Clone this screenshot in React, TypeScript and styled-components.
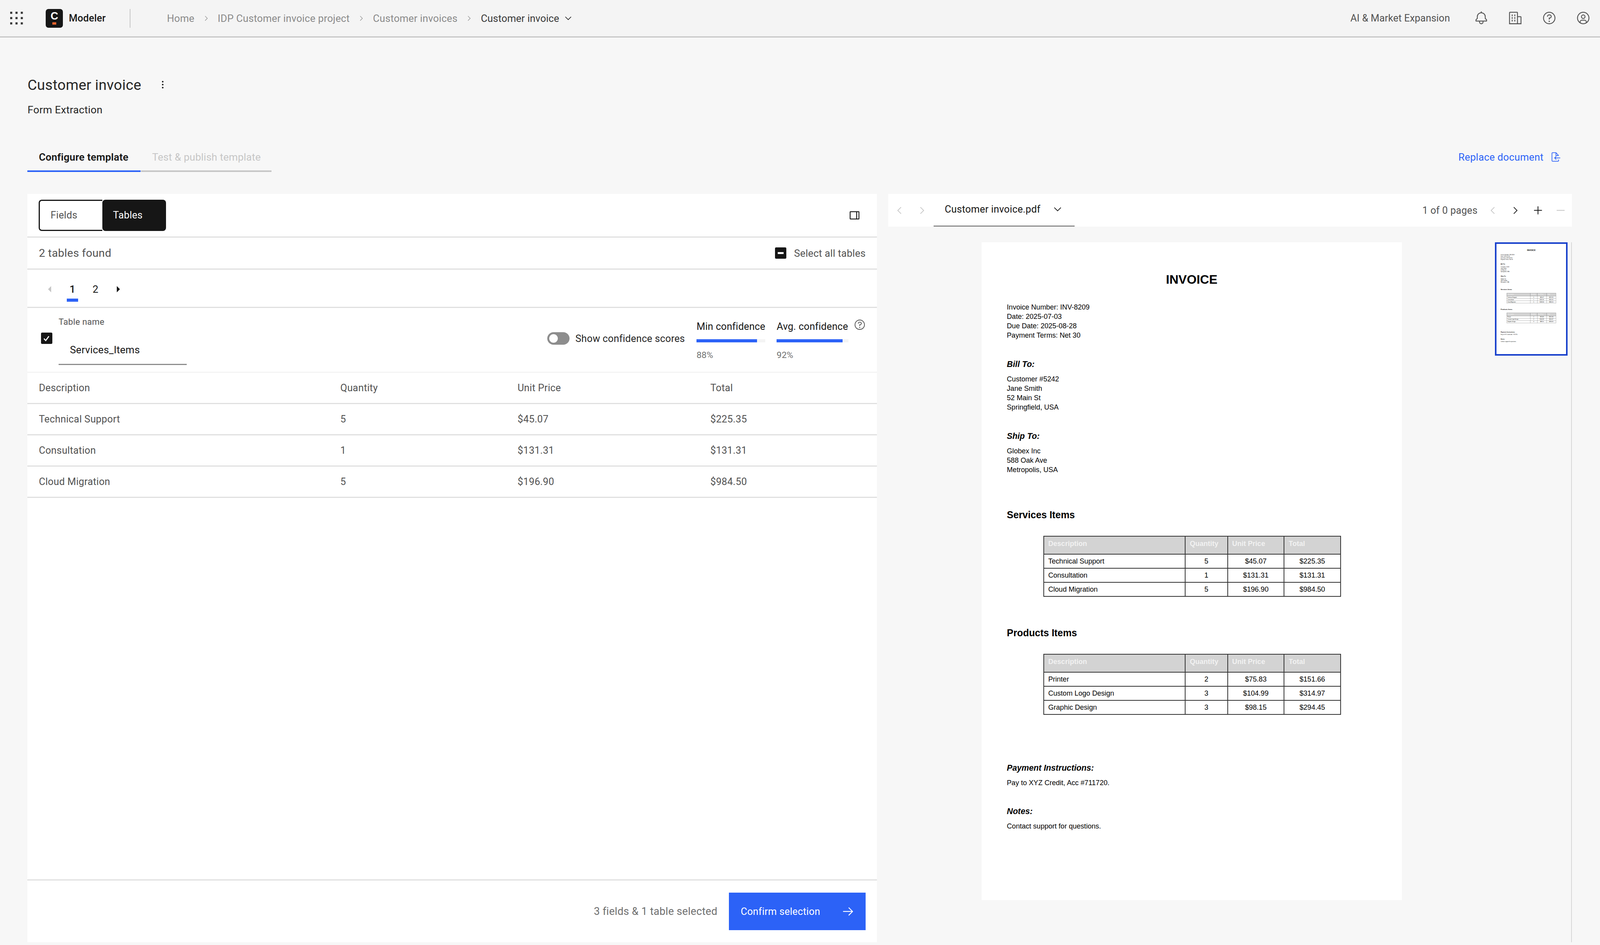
import React from 'react';
import styled, { createGlobalStyle } from 'styled-components';

const UI_FONT = `Roboto, "Noto Sans", sans-serif`;
const DOC_FONT = `"Liberation Sans", Arial, sans-serif`;
const BLUE = '#2c62f7';

// horizontal sizes are taken from the 4532 wide design and follow the window width
const vx = (n: number) => `${(n / 45.32).toFixed(4)}vw`;

const GlobalStyle = createGlobalStyle`
  html, body {
    margin: 0;
    padding: 0;
    width: 100%;
    height: 100%;
    overflow: hidden;
    background: #f7f7f7;
  }
  * { box-sizing: border-box; }
  body {
    font-family: ${UI_FONT};
    font-size: ${vx(29)};
    color: #161616;
    white-space: nowrap;
  }
`;

const Page = styled.div`
  width: 100vw;
  height: 100vh;
  display: flex;
  flex-direction: column;
`;

const Header = styled.header`
  height: 96px;
  flex: none;
  display: flex;
  align-items: center;
  background: #f4f4f4;
  border-bottom: 3px solid #c6c6c6;
`;

const Switcher = styled.div`
  width: ${vx(130)};
  padding-left: ${vx(29)};
  display: flex;
  align-items: center;
`;

const Logo = styled.div`
  width: ${vx(48)};
  height: 48px;
  flex: none;
  border-radius: 7px;
  background: #161616;
  display: flex;
  flex-direction: column;
  align-items: center;
  padding-top: 3px;
`;

const LogoLetter = styled.span`
  font-family: ${DOC_FONT};
  font-weight: 700;
  font-size: 27px;
  line-height: 30px;
  color: #fff;
`;

const LogoMark = styled.span`
  width: ${vx(11)};
  height: 6px;
  margin-top: 1px;
  background: #e8622c;
`;

const ProductName = styled.span`
  margin-left: ${vx(17)};
  width: ${vx(175)};
  height: 48px;
  line-height: 48px;
  font-weight: 500;
  font-size: ${vx(28)};
  letter-spacing: ${vx(0.2)};
  color: #161616;
  border-right: 2px solid #c6c6c6;
`;

const Breadcrumbs = styled.nav`
  margin-left: ${vx(103)};
  display: flex;
  align-items: center;
`;

const Crumb = styled.span<{ $current?: boolean }>`
  font-size: ${vx(28.5)};
  letter-spacing: ${(p) => vx(p.$current ? 0.1 : 0.25)};
  color: ${(p) => (p.$current ? '#393939' : '#8a8a8a')};
`;

const CrumbSep = styled.span`
  width: ${vx(66)};
  display: flex;
  justify-content: center;
  color: #8a8a8a;
`;

const HeaderRight = styled.div`
  margin-left: auto;
  display: flex;
  align-items: center;
`;

const Org = styled.span`
  margin-right: ${vx(41)};
  font-size: ${vx(28)};
  letter-spacing: ${vx(0.1)};
  color: #525252;
`;

const HeaderIcon = styled.div`
  width: ${vx(96)};
  height: 93px;
  display: flex;
  align-items: center;
  justify-content: center;
  color: #525252;
`;

const Main = styled.main`
  flex: 1;
  min-height: 0;
  padding: 0 ${vx(80)} 7px ${vx(78)};
  display: flex;
  flex-direction: column;
`;

const TitleBlock = styled.div`
  height: 241px;
  flex: none;
  padding-top: 92px;
`;

const TitleRow = styled.div`
  display: flex;
  align-items: center;
  height: 58px;
`;

const Title = styled.h1`
  margin: 0;
  font-size: ${vx(41)};
  font-weight: 400;
  letter-spacing: ${vx(0.3)};
  color: #262626;
`;

const Kebab = styled.div`
  margin-left: ${vx(46)};
  display: flex;
  color: #161616;
`;

const Subtitle = styled.div`
  margin-top: 17px;
  font-size: ${vx(29.5)};
  letter-spacing: ${vx(0.3)};
  line-height: 36px;
  color: #262626;
`;

const TabBar = styled.div`
  flex: none;
  height: 103px;
  display: flex;
  align-items: flex-start;
  justify-content: space-between;
`;

const Tabs = styled.div`
  display: flex;
  gap: ${vx(1)};
`;

const Tab = styled.div<{ $active?: boolean; $w: number }>`
  width: ${(p) => vx(p.$w)};
  height: 103px;
  display: flex;
  align-items: center;
  padding: 30px 0 0 ${vx(32)};
  font-size: ${vx(29)};
  letter-spacing: ${vx(0.2)};
  font-weight: ${(p) => (p.$active ? 600 : 400)};
  color: ${(p) => (p.$active ? '#161616' : '#c6c6c6')};
  border-bottom: 4px solid ${(p) => (p.$active ? BLUE : '#c6c6c6')};
`;

const ReplaceLink = styled.div`
  height: 99px;
  padding-top: 30px;
  display: flex;
  align-items: center;
  gap: ${vx(18)};
  margin-right: ${vx(32)};
  color: ${BLUE};
  font-size: ${vx(28.5)};
  letter-spacing: ${vx(0.3)};
`;

const Columns = styled.div`
  flex: 1;
  min-height: 0;
  margin-top: 56px;
  display: flex;
  gap: ${vx(32)};
`;

const LeftPanel = styled.section`
  width: ${vx(2406)};
  flex: none;
  background: #fff;
  display: flex;
  flex-direction: column;
`;

const Row = styled.div<{ $h: number }>`
  height: ${(p) => p.$h}px;
  flex: none;
  display: flex;
  align-items: center;
  padding: 0 ${vx(32)};
  border-bottom: 3px solid #e0e0e0;
`;

const Segmented = styled.div`
  display: flex;
  width: ${vx(360)};
  height: 80px;
`;

const Segment = styled.div<{ $on?: boolean }>`
  width: ${vx(180)};
  display: flex;
  align-items: center;
  padding-left: ${vx(30)};
  font-size: ${vx(28)};
  letter-spacing: ${vx(0.3)};
  background: ${(p) => (p.$on ? '#161616' : '#fff')};
  color: ${(p) => (p.$on ? '#fff' : '#525252')};
  border: 3px solid #161616;
  border-right: ${(p) => (p.$on ? '3px solid #161616' : 'none')};
  border-left: ${(p) => (p.$on ? 'none' : '3px solid #161616')};
  border-radius: ${(p) => (p.$on ? '8px' : '8px 0 0 8px')};
`;

const Spacer = styled.div`
  flex: 1;
`;

const PanelToggleIcon = styled.svg`
  display: block;
  width: ${vx(28)};
  height: 24px;
  margin-right: ${vx(18)};
`;

const Found = styled.span`
  font-size: ${vx(31.5)};
  letter-spacing: ${vx(0.35)};
  color: #525252;
`;

const CheckBox = styled.div`
  width: ${vx(32)};
  height: ${vx(32)};
  flex: none;
  border-radius: 3px;
  background: #161616;
  display: flex;
  align-items: center;
  justify-content: center;
`;

const CheckMinus = styled.span`
  width: ${vx(16)};
  height: 5px;
  background: #fff;
`;

const SelectAll = styled.span`
  margin-left: ${vx(22)};
  font-size: ${vx(28.5)};
  letter-spacing: ${vx(0.2)};
  color: #525252;
`;

const Pager = styled(Row)`
  padding-left: ${vx(58)};
`;

const PageArrow = styled.div<{ $off?: boolean }>`
  width: 0;
  height: 0;
  margin-top: 5px;
  border-top: 8px solid transparent;
  border-bottom: 8px solid transparent;
  ${(p) =>
    p.$off
      ? `border-right: ${vx(9)} solid #c6c6c6;`
      : `border-left: ${vx(9)} solid #161616;`}
`;

const PagerNums = styled.div`
  display: flex;
  align-items: flex-end;
  margin: 19px ${vx(28)} 0 ${vx(28)};
  height: 50px;
`;

const PageNum = styled.div<{ $on?: boolean }>`
  width: ${vx(32)};
  height: 50px;
  margin: 0 ${vx(16.5)};
  padding-bottom: 6px;
  display: flex;
  align-items: center;
  justify-content: center;
  font-size: ${vx(29)};
  font-weight: ${(p) => (p.$on ? 500 : 400)};
  border-bottom: 8px solid ${(p) => (p.$on ? BLUE : 'transparent')};
`;

const TableHead = styled.div`
  height: 166px;
  flex: none;
  padding: 0 ${vx(32)} 0 ${vx(38)};
  display: flex;
  border-bottom: 3px solid #f4f4f4;
`;

const TableCheck = styled(CheckBox)`
  margin-top: 63px;
`;

const CheckMark = styled.svg`
  display: block;
  width: ${vx(24)};
  height: ${vx(24)};
`;

const NameField = styled.div`
  margin-left: ${vx(18)};
  width: ${vx(363)};
  padding-top: 20px;
`;

const NameLabel = styled.div`
  font-size: ${vx(24.5)};
  line-height: 30px;
  letter-spacing: ${vx(0.3)};
  color: #525252;
`;

const NameInput = styled.div`
  margin-top: 20px;
  height: 76px;
  padding-left: ${vx(32)};
  display: flex;
  align-items: center;
  font-size: ${vx(28.8)};
  letter-spacing: ${vx(0.3)};
  color: #161616;
  border-bottom: 3px solid #8d8d8d;
`;

const Confidence = styled.div`
  margin-left: auto;
  display: flex;
  align-items: flex-start;
`;

const ToggleWrap = styled.div`
  display: flex;
  align-items: center;
  margin-top: 62px;
  margin-right: ${vx(33)};
`;

const Toggle = styled.div`
  width: ${vx(63)};
  height: 32px;
  border-radius: 16px;
  background: #8d8d8d;
  display: flex;
  align-items: center;
  padding-left: 5px;
`;

const ToggleKnob = styled.span`
  width: 22px;
  height: 22px;
  border-radius: 50%;
  background: #fff;
`;

const ToggleLabel = styled.span`
  margin-left: ${vx(17)};
  font-size: ${vx(28)};
  letter-spacing: ${vx(0.25)};
  color: #262626;
`;

const Meter = styled.div<{ $w: number; $gap: number }>`
  width: ${(p) => vx(p.$w)};
  margin-right: ${(p) => vx(p.$gap)};
  padding-top: 30px;
`;

const MeterLabel = styled.div`
  font-size: ${vx(28)};
  line-height: 36px;
  letter-spacing: ${vx(0.2)};
  color: #161616;
  height: 32px;
`;

const MeterTrack = styled.div`
  height: 8px;
  margin-top: 18px;
  background: #f4f4f4;
`;

const MeterFill = styled.div`
  height: 100%;
  background: ${BLUE};
`;

const MeterValue = styled.div`
  margin-top: 19px;
  font-size: ${vx(25)};
  line-height: 28px;
  letter-spacing: ${vx(0.2)};
  color: #6f6f6f;
`;

const HelpSmall = styled.div`
  margin-top: 28px;
  color: #525252;
  display: flex;
`;

const DataRow = styled.div`
  height: 80px;
  flex: none;
  display: grid;
  grid-template-columns: ${vx(854)} ${vx(502)} ${vx(546)} 1fr;
  align-items: center;
  padding-left: ${vx(32)};
  border-bottom: 3px solid #e0e0e0;
  font-size: ${vx(28)};
  letter-spacing: ${vx(0.3)};
  color: #525252;
`;

const PanelFill = styled.div`
  flex: 1;
`;

const Footer = styled.div`
  height: 161px;
  flex: none;
  border-top: 3px solid #e0e0e0;
  padding: 0 ${vx(32)};
  display: flex;
  align-items: center;
  justify-content: flex-end;
`;

const SelectedNote = styled.span`
  margin-right: ${vx(33)};
  font-size: ${vx(30)};
  letter-spacing: ${vx(0.3)};
  color: #6f6f6f;
`;

const ConfirmButton = styled.div`
  width: ${vx(387)};
  height: 96px;
  background: ${BLUE};
  color: #fff;
  display: flex;
  align-items: center;
  justify-content: space-between;
  padding: 0 ${vx(31)} 0 ${vx(33)};
  font-size: ${vx(28)};
  letter-spacing: ${vx(0.3)};
`;

const RightPanel = styled.section`
  flex: 1;
  min-width: 0;
  display: flex;
  flex-direction: column;
`;

const ViewerBar = styled.div`
  height: 84px;
  flex: none;
  background: #fff;
  display: flex;
  align-items: center;
`;

const BarIcon = styled.div<{ $w: number; $off?: boolean }>`
  width: ${(p) => vx(p.$w)};
  display: flex;
  justify-content: center;
  color: ${(p) => (p.$off ? '#c6c6c6' : '#161616')};
`;

const FileSelect = styled.div`
  width: ${vx(400)};
  height: 84px;
  padding: 0 ${vx(32)} 3px ${vx(32)};
  display: flex;
  align-items: center;
  justify-content: space-between;
  font-size: ${vx(28)};
  letter-spacing: ${vx(0.3)};
  color: #161616;
  border-bottom: 3px solid #8d8d8d;
`;

const PageCount = styled.span`
  margin-left: auto;
  margin-right: ${vx(11)};
  font-size: ${vx(28)};
  letter-spacing: ${vx(0.2)};
  color: #525252;
`;

const Viewer = styled.div`
  flex: 1;
  min-height: 0;
  display: flex;
  padding-top: 40px;
`;

const DocColumn = styled.div`
  width: ${vx(264)};
  flex: none;
`;

const ThumbColumn = styled.div`
  margin-left: ${vx(263)};
  width: ${vx(206)};
  flex: none;
`;

const Thumb = styled.div`
  width: ${vx(206)};
  height: 290px;
  border: 4px solid #1a42cc;
  background: #fff;
  overflow: hidden;
`;

const ThumbScale = styled.div`
  transform: scale(0.1655, 0.1676);
  transform-origin: 0 0;
  width: ${vx(1191)};
`;

const ScrollLine = styled.div`
  margin-left: ${vx(10)};
  width: 3px;
  background: #d8d8d8;
`;

const InvoiceSheet = styled.article`
  width: ${vx(1191)};
  height: 1683px;
  flex: none;
  background: #fff;
  color: #000;
  font-family: ${DOC_FONT};
  font-size: ${vx(20)};
  line-height: 24px;
  padding: 73px ${vx(72)} 0 ${vx(72)};
`;

const InvoiceTitle = styled.h2`
  margin: 0 0 37px;
  text-align: center;
  font-size: ${vx(35.5)};
  line-height: 44px;
  font-weight: 700;
`;

const Lines = styled.div`
  height: 96px;
`;

const BlockHead = styled.h3<{ $top: number }>`
  margin: ${(p) => p.$top}px 0 12px;
  font-size: ${vx(23.5)};
  line-height: 28px;
  font-weight: 700;
  font-style: italic;
`;

const SectionHead = styled.h3<{ $top: number }>`
  margin: ${(p) => p.$top}px 0 37px;
  font-size: ${vx(27.5)};
  line-height: 32px;
  font-weight: 700;
`;

const InvoiceTable = styled.table`
  margin-left: ${vx(103)};
  width: ${vx(841)};
  border-collapse: collapse;
  table-layout: fixed;
  font-size: ${vx(20)};
  line-height: 24px;
`;

const Col = styled.col<{ $w: number }>`
  width: ${(p) => vx(p.$w)};
`;

const Th = styled.th`
  height: 46px;
  padding: 6px ${vx(12)} 0;
  vertical-align: top;
  text-align: left;
  font-weight: 700;
  background: #d3d3d3;
  color: #f2f2f2;
  border: 2px solid #333;
`;

const Td = styled.td<{ $center?: boolean }>`
  height: 36px;
  padding: 0 ${vx(12)};
  text-align: ${(p) => (p.$center ? 'center' : 'left')};
  border: 2px solid #333;
`;

const IconSvg = styled.svg<{ $size: number }>`
  display: block;
  flex: none;
  width: ${(p) => vx(p.$size)};
  height: ${(p) => vx(p.$size)};
`;

const Icon = ({ size, children }: { size: number; children: React.ReactNode }) => (
  <IconSvg $size={size} viewBox="0 0 32 32" fill="currentColor">
    {children}
  </IconSvg>
);

const ChevronRight = ({ size = 24 }: { size?: number }) => (
  <Icon size={size}><path d="M22 16 12 26 10.6 24.6 19.2 16 10.6 7.4 12 6z" /></Icon>
);
const ChevronLeft = ({ size = 24 }: { size?: number }) => (
  <Icon size={size}><path d="M10 16 20 6 21.4 7.4 12.8 16 21.4 24.6 20 26z" /></Icon>
);
const ChevronDown = ({ size = 24 }: { size?: number }) => (
  <Icon size={size}><path d="M16 22 6 12 7.4 10.6 16 19.2 24.6 10.6 26 12z" /></Icon>
);
const HelpIcon = ({ size }: { size: number }) => (
  <Icon size={size}>
    <path d="M16,2A14,14,0,1,0,30,16,14,14,0,0,0,16,2Zm0,26A12,12,0,1,1,28,16,12,12,0,0,1,16,28Z" />
    <circle cx="16" cy="23.5" r="1.5" />
    <path d="M17,8H15.5A4.49,4.49,0,0,0,11,12.5V13h2v-.5A2.5,2.5,0,0,1,15.5,10H17a2.5,2.5,0,0,1,0,5H15v4.5h2V17a4.5,4.5,0,0,0,0-9Z" />
  </Icon>
);

const services = [
  ['Technical Support', '5', '$45.07', '$225.35'],
  ['Consultation', '1', '$131.31', '$131.31'],
  ['Cloud Migration', '5', '$196.90', '$984.50'],
];

const products = [
  ['Printer', '2', '$75.83', '$151.66'],
  ['Custom Logo Design', '3', '$104.99', '$314.97'],
  ['Graphic Design', '3', '$98.15', '$294.45'],
];

const ItemTable = ({ rows }: { rows: string[][] }) => (
  <InvoiceTable>
    <colgroup>
      <Col $w={401} />
      <Col $w={120} />
      <Col $w={160} />
      <Col $w={160} />
    </colgroup>
    <thead>
      <tr>
        <Th>Description</Th>
        <Th>Quantity</Th>
        <Th>Unit Price</Th>
        <Th>Total</Th>
      </tr>
    </thead>
    <tbody>
      {rows.map((r) => (
        <tr key={r[0]}>
          <Td>{r[0]}</Td>
          <Td $center>{r[1]}</Td>
          <Td $center>{r[2]}</Td>
          <Td $center>{r[3]}</Td>
        </tr>
      ))}
    </tbody>
  </InvoiceTable>
);

const Invoice = () => (
  <InvoiceSheet>
    <InvoiceTitle>INVOICE</InvoiceTitle>
    <Lines>
      <div>Invoice Number: INV-8209</div>
      <div>Date: 2025-07-03</div>
      <div>Due Date: 2025-08-28</div>
      <div>Payment Terms: Net 30</div>
    </Lines>
    <BlockHead $top={48}>Bill To:</BlockHead>
    <div>Customer #5242</div>
    <div>Jane Smith</div>
    <div>52 Main St</div>
    <div>Springfield, USA</div>
    <BlockHead $top={48}>Ship To:</BlockHead>
    <div>Globex Inc</div>
    <div>588 Oak Ave</div>
    <div>Metropolis, USA</div>
    <SectionHead $top={88}>Services Items</SectionHead>
    <ItemTable rows={services} />
    <SectionHead $top={77}>Products Items</SectionHead>
    <ItemTable rows={products} />
    <BlockHead $top={122}>Payment Instructions:</BlockHead>
    <div>Pay to XYZ Credit, Acc #711720.</div>
    <BlockHead $top={47}>Notes:</BlockHead>
    <div>Contact support for questions.</div>
  </InvoiceSheet>
);

const columns = ['Description', 'Quantity', 'Unit Price', 'Total'];

export default function App() {
  return (
    <Page>
      <GlobalStyle />
      <Header>
        <Switcher>
          <IconSvg $size={36} viewBox="0 0 36 36" fill="#393939">
            {[0, 1, 2].map((y) =>
              [0, 1, 2].map((x) => <rect key={`${x}-${y}`} x={x * 15} y={y * 15} width="6" height="6" />)
            )}
          </IconSvg>
        </Switcher>
        <Logo>
          <LogoLetter>C</LogoLetter>
          <LogoMark />
        </Logo>
        <ProductName>Modeler</ProductName>
        <Breadcrumbs>
          <Crumb>Home</Crumb>
          <CrumbSep><ChevronRight size={22} /></CrumbSep>
          <Crumb>IDP Customer invoice project</Crumb>
          <CrumbSep><ChevronRight size={22} /></CrumbSep>
          <Crumb>Customer invoices</Crumb>
          <CrumbSep><ChevronRight size={22} /></CrumbSep>
          <Crumb $current>Customer invoice</Crumb>
          <BarIcon $w={52}><ChevronDown size={28} /></BarIcon>
        </Breadcrumbs>
        <HeaderRight>
          <Org>AI &amp; Market Expansion</Org>
          <HeaderIcon>
            <Icon size={40}>
              <path d="M28.7071,19.293,26,16.5859V13a10.0136,10.0136,0,0,0-9-9.9492V1H15V3.0508A10.0136,10.0136,0,0,0,6,13v3.5859L3.2929,19.293A1,1,0,0,0,3,20v3a1,1,0,0,0,1,1h7v.7768a5.152,5.152,0,0,0,4.5,5.1987A5.0057,5.0057,0,0,0,21,25V24h7a1,1,0,0,0,1-1V20A1,1,0,0,0,28.7071,19.293ZM19,25a3,3,0,0,1-6,0V24h6Zm8-3H5V20.4141L7.707,17.707A1,1,0,0,0,8,17V13a8,8,0,0,1,16,0v4a1,1,0,0,0,.293.707L27,20.4141Z" />
            </Icon>
          </HeaderIcon>
          <HeaderIcon>
            <Icon size={40}>
              <path d="M8 8H10V12H8z M8 14H10V18H8z M14 8H16V12H14z M14 14H16V18H14z M8 20H10V24H8z M14 20H16V24H14z" />
              <path d="M30,14a2,2,0,0,0-2-2H22V4a2,2,0,0,0-2-2H4A2,2,0,0,0,2,4V30H30ZM4,4H20V28H4ZM22,28V14h6V28Z" />
            </Icon>
          </HeaderIcon>
          <HeaderIcon><HelpIcon size={40} /></HeaderIcon>
          <HeaderIcon>
            <Icon size={40}>
              <path d="M16,8a5,5,0,1,0,5,5A5,5,0,0,0,16,8Zm0,8a3,3,0,1,1,3-3A3.0034,3.0034,0,0,1,16,16Z" />
              <path d="M16,2A14,14,0,1,0,30,16,14.0158,14.0158,0,0,0,16,2ZM10,26.3765V25a3.0033,3.0033,0,0,1,3-3h6a3.0033,3.0033,0,0,1,3,3v1.3765a11.8989,11.8989,0,0,1-12,0Zm13.9925-1.4507A5.0016,5.0016,0,0,0,19,20H13a5.0016,5.0016,0,0,0-4.9925,4.9258,12,12,0,1,1,15.985,0Z" />
            </Icon>
          </HeaderIcon>
        </HeaderRight>
      </Header>

      <Main>
        <TitleBlock>
          <TitleRow>
            <Title>Customer invoice</Title>
            <Kebab>
              <Icon size={30}>
                <circle cx="16" cy="7" r="2.4" />
                <circle cx="16" cy="16" r="2.4" />
                <circle cx="16" cy="25" r="2.4" />
              </Icon>
            </Kebab>
          </TitleRow>
          <Subtitle>Form Extraction</Subtitle>
        </TitleBlock>

        <TabBar>
          <Tabs>
            <Tab $active $w={320}>Configure template</Tab>
            <Tab $w={370}>Test &amp; publish template</Tab>
          </Tabs>
          <ReplaceLink>
            Replace document
            <Icon size={30}>
              <path
                d="M26 12 18 3H8a2 2 0 0 0-2 2v22a2 2 0 0 0 2 2h16a2 2 0 0 0 2-2v-3M18 3v9h8M31 19H14M19 14l-5 5 5 5"
                fill="none"
                stroke="currentColor"
                strokeWidth="2"
              />
            </Icon>
          </ReplaceLink>
        </TabBar>

        <Columns>
          <LeftPanel>
            <Row $h={112}>
              <Segmented>
                <Segment>Fields</Segment>
                <Segment $on>Tables</Segment>
              </Segmented>
              <Spacer />
              <PanelToggleIcon viewBox="0 0 28 24" fill="none" stroke="#161616" strokeWidth="2.5">
                <rect x="1.5" y="1.5" width="25" height="21" rx="1" />
                <path d="M20 1.5v21" />
              </PanelToggleIcon>
            </Row>
            <Row $h={82}>
              <Found>2 tables found</Found>
              <Spacer />
              <CheckBox><CheckMinus /></CheckBox>
              <SelectAll>Select all tables</SelectAll>
            </Row>
            <Pager $h={98}>
              <PageArrow $off />
              <PagerNums>
                <PageNum $on>1</PageNum>
                <PageNum>2</PageNum>
              </PagerNums>
              <PageArrow />
            </Pager>
            <TableHead>
              <TableCheck>
                <CheckMark viewBox="0 0 24 24" fill="none" stroke="#fff" strokeWidth="3">
                  <path d="M5 12.5 10 18 19 6" />
                </CheckMark>
              </TableCheck>
              <NameField>
                <NameLabel>Table name</NameLabel>
                <NameInput>Services_Items</NameInput>
              </NameField>
              <Confidence>
                <ToggleWrap>
                  <Toggle><ToggleKnob /></Toggle>
                  <ToggleLabel>Show confidence scores</ToggleLabel>
                </ToggleWrap>
                <Meter $w={195} $gap={32}>
                  <MeterLabel>Min confidence</MeterLabel>
                  <MeterTrack><MeterFill style={{ width: '88%' }} /></MeterTrack>
                  <MeterValue>88%</MeterValue>
                </Meter>
                <Meter $w={203} $gap={16}>
                  <MeterLabel>Avg. confidence</MeterLabel>
                  <MeterTrack><MeterFill style={{ width: '92%' }} /></MeterTrack>
                  <MeterValue>92%</MeterValue>
                </Meter>
                <HelpSmall><HelpIcon size={33} /></HelpSmall>
              </Confidence>
            </TableHead>
            <DataRow>
              {columns.map((c) => <span key={c}>{c}</span>)}
            </DataRow>
            {services.map((r) => (
              <DataRow key={r[0]}>
                {r.map((c, i) => <span key={i}>{c}</span>)}
              </DataRow>
            ))}
            <PanelFill />
            <Footer>
              <SelectedNote>3 fields &amp; 1 table selected</SelectedNote>
              <ConfirmButton>
                Confirm selection
                <Icon size={38}>
                  <path d="M18 6 16.57 7.393 24.15 15 4 15 4 17 24.15 17 16.57 24.573 18 26 28 16 18 6z" />
                </Icon>
              </ConfirmButton>
            </Footer>
          </LeftPanel>

          <RightPanel>
            <ViewerBar>
              <BarIcon $w={64} $off><ChevronLeft size={32} /></BarIcon>
              <BarIcon $w={64} $off><ChevronRight size={32} /></BarIcon>
              <FileSelect>
                Customer invoice.pdf
                <ChevronDown size={32} />
              </FileSelect>
              <PageCount>1 of 0 pages</PageCount>
              <BarIcon $w={64} $off><ChevronLeft size={32} /></BarIcon>
              <BarIcon $w={64}><ChevronRight size={32} /></BarIcon>
              <BarIcon $w={64}>
                <Icon size={36}><path d="M17 15 17 6 15 6 15 15 6 15 6 17 15 17 15 26 17 26 17 17 26 17 26 15 17 15z" /></Icon>
              </BarIcon>
              <BarIcon $w={64} $off>
                <Icon size={36}><rect x="6" y="15" width="20" height="2" /></Icon>
              </BarIcon>
            </ViewerBar>
            <Viewer>
              <DocColumn />
              <Invoice />
              <ThumbColumn>
                <Thumb>
                  <ThumbScale><Invoice /></ThumbScale>
                </Thumb>
              </ThumbColumn>
              <ScrollLine />
            </Viewer>
          </RightPanel>
        </Columns>
      </Main>
    </Page>
  );
}
